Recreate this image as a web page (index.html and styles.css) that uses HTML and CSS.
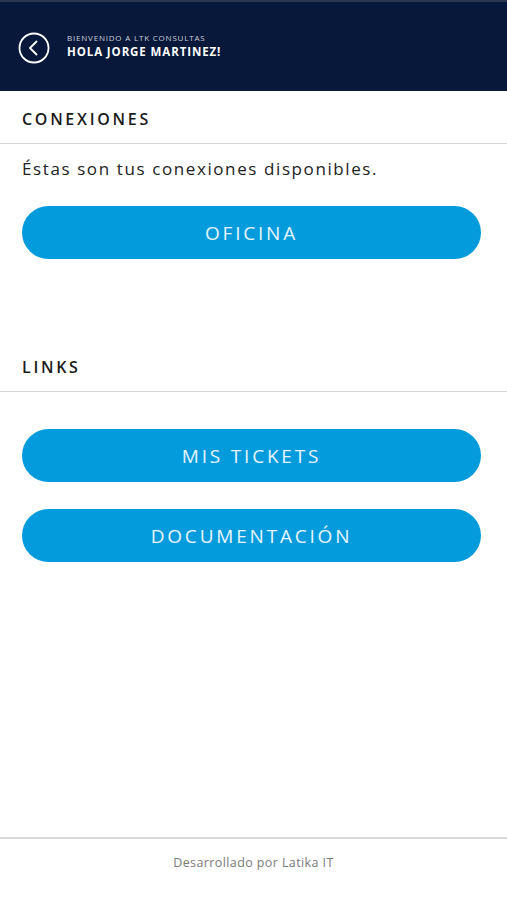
FILE: index.html
```html
<!DOCTYPE html>
<html>
<head>
    <link rel="stylesheet" href="styles.css">
</head>
<body>

<div class="app">
    <header class="topbar">
        <button class="back-btn" aria-label="Volver">
            <svg width="32" height="32" viewBox="0 0 32 32">
                <circle cx="16" cy="16" r="14.5" fill="none" stroke="#fff" stroke-width="1.8"/>
                <path d="M18.5 9.5 L12 16 L18.5 22.5" fill="none" stroke="#fff" stroke-width="1.8" stroke-linecap="round" stroke-linejoin="round"/>
            </svg>
        </button>
        <div class="welcome">
            <div class="welcome-sub">BIENVENIDO A LTK CONSULTAS</div>
            <div class="welcome-name">HOLA JORGE MARTINEZ!</div>
        </div>
    </header>

    <main class="content">
        <section class="section">
            <h2 class="section-title">CONEXIONES</h2>
            <div class="section-body">
                <p class="intro">Éstas son tus conexiones disponibles.</p>
                <a class="pill" href="#">OFICINA</a>
            </div>
        </section>

        <section class="section links">
            <h2 class="section-title">LINKS</h2>
            <div class="section-body">
                <a class="pill" href="#">MIS TICKETS</a>
                <a class="pill" href="#">DOCUMENTACIÓN</a>
            </div>
        </section>
    </main>

    <footer class="footer">Desarrollado por Latika IT</footer>
</div>

</body>
</html>
```

FILE: styles.css
```css
* {
    box-sizing: border-box;
}
body {
    margin: 0;
    font-family: "Open Sans", Arial, sans-serif;
    background-color: #ffffff;
    color: #1a1a1a;
}
.app {
    display: flex;
    flex-direction: column;
    min-height: 900px;
}
.topbar {
    height: 91px;
    background-color: #07183a;
    border-top: 2px solid #2a3550;
    display: flex;
    align-items: center;
    padding: 0 0 0 18px;
    gap: 17px;
}
.back-btn {
    width: 32px;
    height: 32px;
    padding: 0;
    border: none;
    background: none;
    display: flex;
    margin-top: 2px;
}
.welcome {
    color: #ffffff;
    margin-top: -2px;
}
.welcome-sub {
    font-size: 8px;
    color: #c9cfdb;
    line-height: 12px;
    letter-spacing: 0.8px;
}
.welcome-name {
    font-size: 11.5px;
    font-weight: 700;
    line-height: 15px;
    letter-spacing: 0.9px;
}
.content {
    flex: 1;
}
.section-title {
    margin: 0;
    font-size: 16px;
    font-weight: 600;
    letter-spacing: 2.7px;
    color: #1b1b1b;
    padding: 17px 22px 13px;
    border-bottom: 1.5px solid #d6d6d6;
    line-height: 22px;
}
.section-body {
    padding: 0 26px 0 22px;
    display: flex;
    flex-direction: column;
}
.intro {
    margin: 13px 0 0;
    font-size: 17px;
    letter-spacing: 1.6px;
    line-height: 24px;
    color: #222;
}
.pill {
    display: flex;
    align-items: center;
    justify-content: center;
    height: 53px;
    border-radius: 27px;
    background-color: #049bdc;
    color: #e6f5fc;
    text-decoration: none;
    font-size: 19px;
    letter-spacing: 2.8px;
    margin-top: 25px;
}
.section + .section {
    margin-top: 80px;
}
.links .pill {
    margin-top: 27px;
}
.links .pill:first-child {
    margin-top: 37px;
}
.footer {
    border-top: 2px solid #d8d8d8;
    height: 63px;
    text-align: center;
    font-size: 12.5px;
    letter-spacing: 0.4px;
    color: #7a7a7a;
    padding-top: 15px;
}
```
